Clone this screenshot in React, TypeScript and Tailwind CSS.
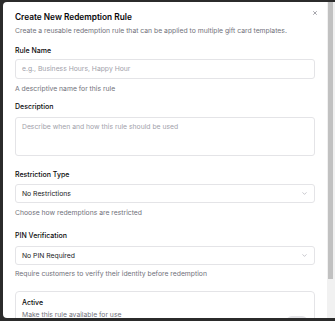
import {FC} from "react";

const Chevron: FC = () => (
  <svg width="7" height="7" viewBox="0 0 24 24" fill="none" stroke="#a1a1aa" strokeWidth="2" strokeLinecap="round" strokeLinejoin="round">
    <path d="m6 9 6 6 6-6" />
  </svg>
);

interface SelectProps {
  value: string;
}

const SelectBox: FC<SelectProps> = ({value}) => (
  <div className="flex h-[19px] items-center justify-between rounded-[3px] border border-[#e4e4e7] px-[6px] text-[6.8px] leading-[10px] text-[#18181b]">
    <span>{value}</span>
    <Chevron />
  </div>
);

export default function App() {
  return (
    <div
      className="h-[321px] w-[335px] overflow-hidden bg-[#2b2b2b] pl-[3px] pt-[2px]"
      style={{fontFamily: "Inter, 'Noto Sans', sans-serif"}}
    >
      <div className="relative flex h-[316px] w-[332px] overflow-hidden rounded-l-[4px] bg-white">
        <div className="flex w-[324px] flex-none flex-col px-[12px] pt-[10px] [&>*]:shrink-0">
          <h1 className="text-[8.3px] font-semibold leading-[11px] text-[#09090b]">
            Create New Redemption Rule
          </h1>
          <p className="mt-[3px] text-[6.8px] leading-[10px] text-[#71717a]">
            Create a reusable redemption rule that can be applied to multiple gift card templates.
          </p>

          <label className="mt-[10px] text-[7px] font-medium leading-[10px] text-[#09090b]">Rule Name</label>
          <div className="mt-[3px] flex h-[20px] items-center rounded-[3px] border border-[#e4e4e7] px-[6px] text-[6.8px] leading-[10px] text-[#a1a1aa]">
            e.g., Business Hours, Happy Hour
          </div>
          <p className="mt-[5px] text-[6.8px] leading-[10px] text-[#71717a]">A descriptive name for this rule</p>

          <label className="mt-[8px] text-[7px] font-medium leading-[10px] text-[#09090b]">Description</label>
          <div className="mt-[5px] h-[39px] rounded-[3px] border border-[#e4e4e7] px-[6px] pt-[4px] text-[6.8px] leading-[10px] text-[#a1a1aa]">
            Describe when and how this rule should be used
          </div>

          <label className="mt-[14px] text-[7px] font-medium leading-[10px] text-[#09090b]">Restriction Type</label>
          <div className="mt-[4px]">
            <SelectBox value="No Restrictions" />
          </div>
          <p className="mt-[5px] text-[6.8px] leading-[10px] text-[#71717a]">Choose how redemptions are restricted</p>

          <label className="mt-[13px] text-[7px] font-medium leading-[10px] text-[#09090b]">PIN Verification</label>
          <div className="mt-[5px]">
            <SelectBox value="No PIN Required" />
          </div>
          <p className="mt-[4px] text-[6.8px] leading-[10px] text-[#71717a]">
            Require customers to verify their identity before redemption
          </p>

          <div className="mt-[12px] flex items-start justify-between rounded-[4px] border border-[#e4e4e7] px-[6px] pb-[10px] pt-[6px]">
            <div className="flex flex-col">
              <span className="text-[7px] font-medium leading-[10px] text-[#09090b]">Active</span>
              <span className="mt-[2px] text-[6.8px] leading-[10px] text-[#71717a]">Make this rule available for use</span>
            </div>
            <div className="mt-[18px] h-[12px] w-[22px] rounded-full bg-[#e4e4e7]" />
          </div>
        </div>

        <div className="flex w-[8px] flex-none flex-col bg-[#f1f1f1]">
          <div className="ml-[1px] h-[277px] w-[5px] bg-[#c1c1c1]" />
        </div>

        <button className="absolute right-[17px] top-[8px] flex h-[6px] w-[6px] items-center justify-center text-[#71717a]">
          <svg width="6" height="6" viewBox="0 0 24 24" fill="none" stroke="currentColor" strokeWidth="2.5" strokeLinecap="round">
            <path d="M18 6 6 18M6 6l12 12" />
          </svg>
        </button>
      </div>
    </div>
  );
}
